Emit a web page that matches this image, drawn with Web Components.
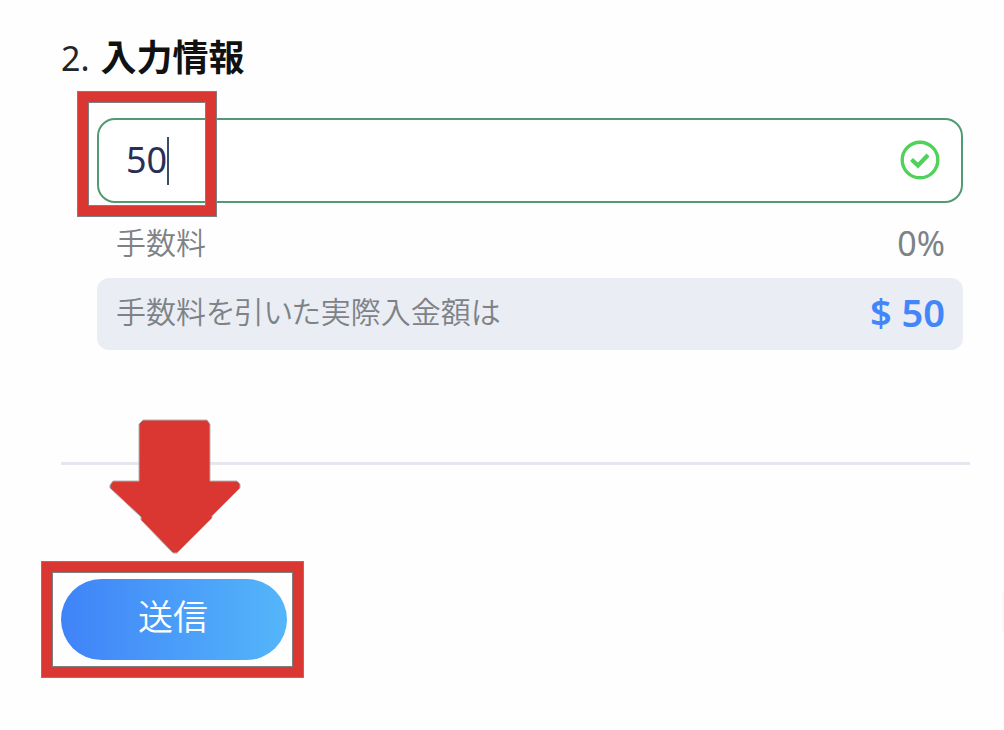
<!DOCTYPE html>
<html lang="ja">
<head>
<meta charset="utf-8">
<meta name="viewport" content="width=device-width, initial-scale=1">
<title>入力情報</title>
<style>
  body { margin: 0; background: #fefefe; font-family: "Noto Sans", "Noto Sans CJK JP", sans-serif; color: #212529; }
</style>
</head>
<body>
<deposit-form>
  <step-heading number="2.">入力情報</step-heading>
  <amount-field value="50"></amount-field>
  <fee-row label="手数料">0%</fee-row>
  <fee-row label="手数料を引いた実際入金額は" total>$ 50</fee-row>
  <submit-button slot="actions">送信</submit-button>
</deposit-form>
<script>
const define = (name, html, setup) => {
  const template = document.createElement('template');
  template.innerHTML = html;
  customElements.define(name, class extends HTMLElement {
    constructor() {
      super();
      this.attachShadow({ mode: 'open' }).append(template.content.cloneNode(true));
    }
    connectedCallback() { if (setup) setup(this, this.shadowRoot); }
  });
};

/* Red callout frame drawn around the area that the reader should look at */
define('callout-frame', `
<style>
  :host { display: block; position: absolute; box-sizing: border-box; pointer-events: none;
    border: 1px solid #7d7f80; background: none; }
  div { box-sizing: border-box; height: 100%; border: 10px solid #da3732; }
  span { display: block; box-sizing: border-box; height: 100%; border: 1px solid #7d7f80; }
</style>
<div><span></span></div>`);

define('callout-arrow', `
<style>:host { display: block; position: absolute; pointer-events: none; } svg { display: block; }</style>
<svg width="132" height="136" viewBox="0 0 132 136" aria-hidden="true">
  <path d="M34 1H98L101 5V62H128L131 65V69L103 97V99L68 134H64L32 101V98L1 69V66L4 62H30V5Z"
    fill="#da3732" stroke="#b3b3b3" stroke-width="1" stroke-linejoin="round"/>
</svg>`);

define('step-heading', `
<style>
  :host { display: block; }
  h2 { margin: 0; font-size: 36px; line-height: 52px; font-weight: 600; color: #111; display: flex; gap: 11px; }
  span { font-weight: 400; font-size: 34px; color: #212529; }
</style>
<h2><span></span><slot></slot></h2>`, (el, root) => {
  root.querySelector('span').textContent = el.getAttribute('number');
});

define('amount-field', `
<style>
  :host { display: block; margin: 34px 7px 0 36px; }
  .box { position: relative; display: flex; align-items: center; box-sizing: border-box; height: 85px;
    border: 2px solid #529b72; border-radius: 18px; background: #fff; padding: 0 21px 2px 27px; }
  input { flex: 1; min-width: 0; border: 0; outline: 0; padding: 0; background: none;
    font: 400 36px/48px "Noto Sans", sans-serif; color: #2a2f55; }
  .caret { position: absolute; left: 68px; top: 17px; width: 2px; height: 48px; background: #3b4b68; }
  callout-frame { left: -22px; top: -29px; width: 140px; height: 126px; }
  svg { display: block; flex: none; }
</style>
<div class="box">
  <input type="text" inputmode="decimal" aria-label="入力情報">
  <span class="caret"></span>
  <svg width="40" height="40" viewBox="0 0 40 40" fill="none" stroke="#4fd15a" aria-hidden="true">
    <circle cx="20" cy="20" r="17.8" stroke-width="3.4"/>
    <path d="M11.5 19.5L18 25.5L28 15" stroke-width="4.2"/>
  </svg>
  <callout-frame></callout-frame>
</div>`, (el, root) => {
  root.querySelector('input').value = el.getAttribute('value');
});

define('fee-row', `
<style>
  :host { display: flex; justify-content: space-between; align-items: center; box-sizing: border-box;
    height: 75px; margin: 0 7px 0 36px; padding: 5px 18px 0 19px; color: #7d8287; font-size: 30px; line-height: 44px; }
  :host([total]) { height: 72px; padding: 0 18px 4px 19px; border-radius: 12px; background: #eaedf3; }
  .label { font-family: "Noto Sans CJK JP", sans-serif; font-weight: 350; font-feature-settings: "palt"; padding-bottom: 4px; }
  .value { font-size: 34px; }
  :host([total]) .value { font-size: 38px; font-weight: 600; color: #4386f9; }
</style>
<span class="label"></span><span class="value"><slot></slot></span>`, (el, root) => {
  root.querySelector('.label').textContent = el.getAttribute('label');
});

define('submit-button', `
<style>
  :host { display: block; position: relative; }
  button { display: block; width: 226px; height: 81px; border: 0; border-radius: 41px; padding: 0 2px 9px 0;
    background: linear-gradient(90deg, #4083f8, #54b6fa); color: #fff; cursor: pointer;
    font: 350 35px/50px "Noto Sans CJK JP", sans-serif; }
  callout-frame { left: -20px; top: -18px; width: 263px; height: 117px; }
  callout-arrow { left: 48px; top: -160px; }
</style>
<button type="submit"><slot></slot></button>
<callout-frame></callout-frame>
<callout-arrow></callout-arrow>`);

define('deposit-form', `
<style>
  :host { display: block; }
  form { padding: 32px 0 70px 61px; }
  .fields { margin-right: 34px; }
  hr { margin: 112px 34px 0 0; border: 0; height: 3px; background: #e6e7ee; }
  footer { display: flex; justify-content: space-between; align-items: center; margin-top: 114px; }
  .edge { width: 2px; height: 42px; margin-bottom: 16px; background: #f8f8fa; }
</style>
<form onsubmit="return false">
  <div class="fields"><slot></slot></div>
  <hr>
  <footer><slot name="actions"></slot><span class="edge"></span></footer>
</form>`);
</script>
</body>
</html>
